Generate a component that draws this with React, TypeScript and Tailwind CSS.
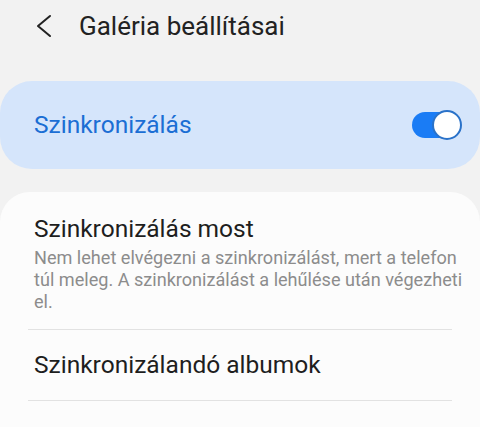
import React from "react"

export default function App() {
    return (
        <div className="w-[480px] h-[427px] overflow-hidden bg-[#f2f2f2] font-['Roboto',sans-serif]">
            <div className="flex items-center h-[52px] pl-[34px]">
                <svg width="20" height="26" viewBox="0 0 20 26" className="shrink-0">
                    <path d="M16 3 L4 13 L16 23" fill="none" stroke="#222" strokeWidth="2" strokeLinecap="round" strokeLinejoin="round"/>
                </svg>
                <h1 className="ml-[25px] text-[26px] text-[#222] leading-none">Galéria beállításai</h1>
            </div>

            <div className="mt-[29px] mx-0 h-[88px] rounded-[32px] bg-[#d5e5fb] flex items-center justify-between pl-[34px] pr-[18px]">
                <span className="text-[24.5px] text-[#1b6ed4]">Szinkronizálás</span>
                <div className="relative w-[50px] h-[30px] flex items-center">
                    <div className="absolute left-0 right-[4px] h-[26px] rounded-full bg-[#1a7cf5]"/>
                    <div className="absolute right-0 w-[30px] h-[30px] rounded-full bg-white border-2 border-[#2a72c9]"/>
                </div>
            </div>

            <div className="mt-[23px] rounded-t-[30px] bg-[#fcfcfc] h-[300px]">
                <div className="pt-[22px] pb-[16px] pl-[34px] pr-[12px]">
                    <div className="text-[24.5px] text-[#1e1e1e] leading-[30px]">Szinkronizálás most</div>
                    <div className="mt-[3px] text-[18.1px] text-[#8c8c8c] leading-[22px]">
                        Nem lehet elvégezni a szinkronizálást, mert a telefon túl meleg. A szinkronizálást a lehűlése után végezheti el.
                    </div>
                </div>
                <div className="mx-[28px] h-px bg-[#e2e2e2]"/>
                <div className="h-[70px] flex items-center px-[34px] text-[24.5px] text-[#1e1e1e]">Szinkronizálandó albumok</div>
                <div className="mx-[28px] h-px bg-[#e2e2e2]"/>
            </div>
        </div>
    )
}
